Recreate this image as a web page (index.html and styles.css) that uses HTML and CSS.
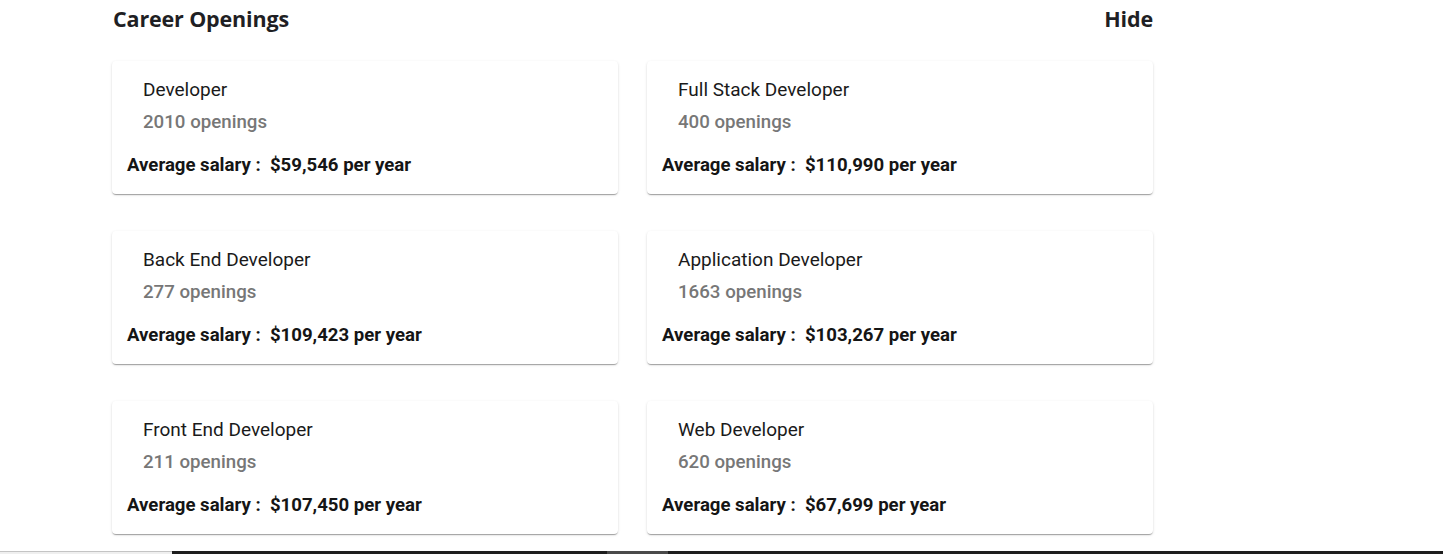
FILE: index.html
```html
<!DOCTYPE html>
<html>
<head>
<meta charset="utf-8">
<link rel="stylesheet" href="styles.css">
</head>
<body>
<div class="page">
  <section class="careers">
    <header class="careers-head">
      <h2 class="careers-title">Career Openings</h2>
      <span class="hide-link">Hide</span>
    </header>
    <div class="card-grid">
      <div class="card">
        <div class="job-title">Developer</div>
        <div class="job-openings">2010 openings</div>
        <div class="job-salary">Average salary :&nbsp; $59,546 per year</div>
      </div>
      <div class="card">
        <div class="job-title">Full Stack Developer</div>
        <div class="job-openings">400 openings</div>
        <div class="job-salary">Average salary :&nbsp; $110,990 per year</div>
      </div>
      <div class="card">
        <div class="job-title">Back End Developer</div>
        <div class="job-openings">277 openings</div>
        <div class="job-salary">Average salary :&nbsp; $109,423 per year</div>
      </div>
      <div class="card">
        <div class="job-title">Application Developer</div>
        <div class="job-openings">1663 openings</div>
        <div class="job-salary">Average salary :&nbsp; $103,267 per year</div>
      </div>
      <div class="card">
        <div class="job-title">Front End Developer</div>
        <div class="job-openings">211 openings</div>
        <div class="job-salary">Average salary :&nbsp; $107,450 per year</div>
      </div>
      <div class="card">
        <div class="job-title">Web Developer</div>
        <div class="job-openings">620 openings</div>
        <div class="job-salary">Average salary :&nbsp; $67,699 per year</div>
      </div>
    </div>
  </section>
  <div class="bottom-strip">
    <div class="strip-light"></div>
    <div class="strip-dark"><div class="strip-thumb"></div></div>
  </div>
</div>
</body>
</html>
```
FILE: styles.css
```css
* { box-sizing: border-box; }
html, body {
  margin: 0;
  padding: 0;
  background: #fff;
  overflow: hidden;
}
.page {
  width: 1443px;
  height: 554px;
  display: flex;
  flex-direction: column;
}
.careers {
  width: 1041px;
  margin-left: 112px;
}
.careers-head {
  display: flex;
  justify-content: space-between;
  align-items: center;
  height: 40px;
  padding-bottom: 4px;
}
.careers-title, .hide-link {
  font-family: "Open Sans", "Noto Sans", sans-serif;
  font-weight: 700;
  font-size: 21.5px;
  color: #1f1f24;
  margin: 0;
  letter-spacing: -0.15px;
}
.careers-title { margin-left: 1px; }
.card-grid {
  margin-top: 21px;
  display: grid;
  grid-template-columns: 506px 506px;
  column-gap: 29px;
  row-gap: 37px;
}
.card {
  background: #fff;
  border-radius: 4px;
  height: 133px;
  box-shadow: 0 2px 1px -1px rgba(0,0,0,0.2), 0 1px 1px 0 rgba(0,0,0,0.14), 0 1px 3px 0 rgba(0,0,0,0.12);
  padding: 18px 15px 0 15px;
  font-family: Roboto, "Liberation Sans", sans-serif;
  font-size: 19px;
}
.job-title {
  padding-left: 16px;
  color: #1a1a1a;
  font-weight: 400;
  line-height: 22px;
}
.job-openings {
  padding-left: 16px;
  margin-top: 10px;
  color: #777;
  font-weight: 500;
  font-size: 18.7px;
  line-height: 22px;
}
.job-salary {
  margin-top: 21px;
  color: #151515;
  font-weight: 700;
  font-size: 18.6px;
  line-height: 22px;
}
.bottom-strip {
  margin-top: auto;
  height: 3px;
  display: flex;
}
.strip-light {
  width: 172px;
  background: #efefef;
  border-top: 1px solid #c4c4c4;
}
.strip-dark {
  flex: 1;
  background: #1e1e1e;
  display: flex;
}
.strip-thumb {
  margin-left: 435px;
  width: 61px;
  background: #4a4a4a;
}
```
